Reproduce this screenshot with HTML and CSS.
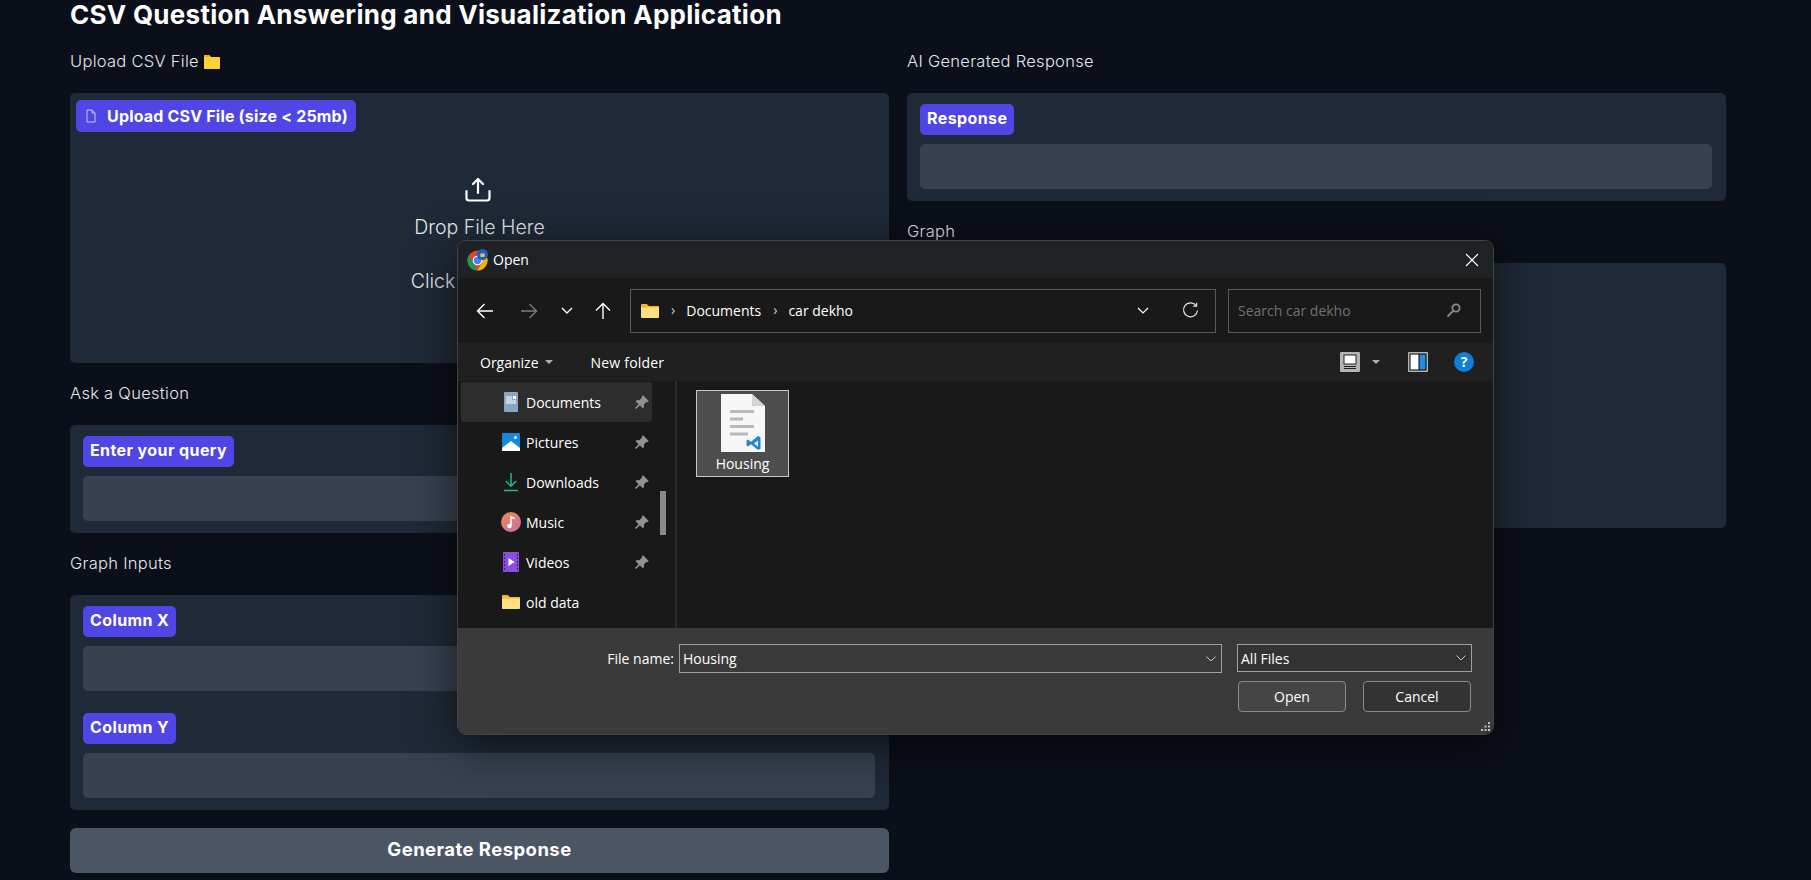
FILE: index.html
```html
<!DOCTYPE html>
<html lang="en">
<head>
    <meta charset="UTF-8">
    <title>CSV Question Answering and Visualization Application</title>
    <link rel="stylesheet" href="styles.css">
</head>
<body>
    <svg class="defs" width="0" height="0">
        <symbol id="pin" viewBox="0 0 14 14">
            <path d="M8 .3l5.700 5.700-1.200 1.200-1.200-.3-2.500 2.500.3 2.500-1.300 1.300-2.900-2.900L1 14l-1-1 3.500-3.800L.6 6.300l1.300-1.300 2.500.3L6.900 2.800l-.2-1.200z" fill="#8f9296"/>
        </symbol>
        <symbol id="folder" viewBox="0 0 18 14">
            <path d="M0 1.200C0 .5.5 0 1.200 0h4.600l2 2H17c.6 0 1 .4 1 1v2H0z" fill="#f5b91f"/>
            <path d="M0 3.500h18v9.400c0 .6-.5 1.100-1.100 1.100H1.100C.5 14 0 13.500 0 12.900z" fill="#ffdf7e"/>
        </symbol>
    </svg>

    <main class="page">
        <h1 class="title">CSV Question Answering and Visualization Application</h1>
        <div class="columns">
            <div class="col">
                <p class="label">Upload CSV File
                    <svg width="16" height="14" viewBox="0 0 16 14"><path d="M0 1c0-.6.4-1 1-1h4l2 2h8c.6 0 1 .4 1 1v10c0 .6-.4 1-1 1H1c-.6 0-1-.4-1-1z" fill="#fdd035"/><path d="M0 1c0-.6.4-1 1-1h4l2 2H0z" fill="#f6a821"/></svg>
                </p>
                <section class="panel upload">
                    <span class="pill pill-upload">
                        <svg width="14" height="14" viewBox="0 0 14 14" fill="none" stroke="#c7c4f5" stroke-width="1"><path d="M3 1h5l3 3v9H3z"/><path d="M8 1v3h3"/></svg>
                        Upload CSV File (size &lt; 25mb)
                    </span>
                    <div class="dropzone">
                        <svg class="drop-icon" width="26" height="25" viewBox="0 0 26 25" fill="none" stroke="#fff" stroke-width="2.200" stroke-linecap="round" stroke-linejoin="round"><path d="M13 16V2M8 7l5-5 5 5"/><path d="M1.500 14v7c0 1.500 1 2.500 2.500 2.500h18c1.500 0 2.500-1 2.500-2.500v-7"/></svg>
                        <p class="drop-text">Drop File Here</p>
                        <p class="drop-or">- or -</p>
                        <p class="drop-text">Click to Upload</p>
                    </div>
                </section>

                <p class="label">Ask a Question</p>
                <section class="panel">
                    <span class="pill">Enter your query</span>
                    <div class="field"></div>
                </section>

                <p class="label">Graph Inputs</p>
                <section class="panel">
                    <span class="pill">Column X</span>
                    <div class="field"></div>
                    <span class="pill pill-next">Column Y</span>
                    <div class="field"></div>
                </section>

                <button class="generate" type="button">Generate Response</button>
            </div>

            <div class="col">
                <p class="label">AI Generated Response</p>
                <section class="panel">
                    <span class="pill">Response</span>
                    <div class="field"></div>
                </section>

                <p class="label">Graph</p>
                <section class="panel graph"></section>
            </div>
        </div>
    </main>

    <div class="dialog">
        <div class="dlg-title">
            <svg class="chrome" width="22" height="22" viewBox="0 0 22 22">
                <circle cx="10.500" cy="11.500" r="10" fill="#db4437"/>
                <path d="M10.500 21.500A10 10 0 0 1 1.800 6.500l5 8.700 3.700 6.300z" fill="#0f9d58"/>
                <path d="M10.500 21.500a10 10 0 0 0 8.700-15h-8.700l4.300 7.500z" fill="#f4b400"/>
                <circle cx="10.500" cy="11.500" r="4.800" fill="#fff"/>
                <circle cx="10.500" cy="11.500" r="3.700" fill="#4285f4"/>
                <circle cx="15.500" cy="5.500" r="5.500" fill="#1a5fc4"/>
                <rect x="13.300" y="4.500" width="4.400" height="3.400" fill="#f4c430"/>
            </svg>
            <span>Open</span>
            <svg class="close" width="14" height="14" viewBox="0 0 14 14" stroke="#fff" stroke-width="1.100"><path d="M1 1l12 12M13 1 1 13"/></svg>
        </div>

        <div class="dlg-nav">
            <svg class="nav-back" width="18" height="18" viewBox="0 0 18 18" fill="none" stroke="#fff" stroke-width="1.400"><path d="M17 9H1.500M8.500 2 1.500 9l7 7"/></svg>
            <svg class="nav-fwd" width="18" height="18" viewBox="0 0 18 18" fill="none" stroke="#7c7c7c" stroke-width="1.400"><path d="M1 9h15.500M9.500 2l7 7-7 7"/></svg>
            <svg class="nav-down" width="12" height="8" viewBox="0 0 12 8" fill="none" stroke="#fff" stroke-width="1.400"><path d="M1 1l5 5 5-5"/></svg>
            <svg class="nav-up" width="18" height="18" viewBox="0 0 18 18" fill="none" stroke="#fff" stroke-width="1.400"><path d="M9 17V1.500M2 8.500l7-7 7 7"/></svg>
            <div class="address">
                <svg width="18" height="14"><use href="#folder"/></svg>
                <span class="crumb-sep">›</span>
                <span>Documents</span>
                <span class="crumb-sep">›</span>
                <span>car dekho</span>
                <svg class="addr-down" width="12" height="8" viewBox="0 0 12 8" fill="none" stroke="#fff" stroke-width="1.200"><path d="M1 1l5 5 5-5"/></svg>
                <svg class="addr-refresh" width="17" height="17" viewBox="0 0 17 17" fill="none" stroke="#e8e8e8" stroke-width="1.200"><path d="M14 3.400A7 7 0 1 0 15.500 8.500"/><path d="M14.600.8v3.400h-3.400"/></svg>
            </div>
            <div class="search">
                <span>Search car dekho</span>
                <svg width="15" height="15" viewBox="0 0 15 15" fill="none" stroke="#8a8a8a" stroke-width="1.800"><circle cx="10" cy="5" r="3.600"/><path d="M7.400 7.600 1.500 13.500"/></svg>
            </div>
        </div>

        <div class="dlg-tools">
            <span class="tool-org">Organize</span>
            <i class="caret caret-org"></i>
            <span class="tool-new">New folder</span>
            <svg class="tool-view" width="20" height="20" viewBox="0 0 20 20">
                <rect width="20" height="20" rx="1" fill="#b4b4b4"/>
                <rect x="4" y="3" width="12" height="9" fill="#fff" stroke="#222"/>
                <path d="M4 14.500h12M4 16.500h12" stroke="#222"/>
            </svg>
            <i class="caret caret-view"></i>
            <svg class="tool-pane" width="20" height="20" viewBox="0 0 20 20">
                <rect width="20" height="20" rx="1" fill="#b4b4b4"/>
                <rect x="1.500" y="1.500" width="17" height="17" fill="#000"/>
                <rect x="2.500" y="2.500" width="8" height="15" fill="#fff"/>
                <rect x="11.500" y="2.500" width="6" height="15" fill="#1e8fe1"/>
            </svg>
            <span class="tool-help">?</span>
        </div>

        <div class="dlg-body">
            <nav class="side">
                <div class="side-row side-active">
                    <span class="side-icon"><svg width="14" height="20" viewBox="0 0 14 20"><rect width="14" height="20" rx="1" fill="#8aa5c4"/><path d="M2 5h6M2 7h6M2 9h10M2 11h10" stroke="#fff"/><rect x="9" y="4" width="3" height="3" fill="#fff"/></svg></span>
                    Documents
                    <svg class="pin" width="14" height="14"><use href="#pin"/></svg>
                </div>
                <div class="side-row">
                    <span class="side-icon"><svg width="18" height="18" viewBox="0 0 18 18"><rect width="18" height="18" rx="1" fill="#1689dc"/><path d="M0 15 9 8l9 7v3H0z" fill="#fff"/><circle cx="13.500" cy="4.500" r="1.500" fill="#fff"/></svg></span>
                    Pictures
                    <svg class="pin" width="14" height="14"><use href="#pin"/></svg>
                </div>
                <div class="side-row">
                    <span class="side-icon"><svg width="14" height="20" viewBox="0 0 14 20" fill="none" stroke="#21b892" stroke-width="1.500"><path d="M7 1v13M1.800 9 7 14.200 12.200 9M0 18.500h14"/></svg></span>
                    Downloads
                    <svg class="pin" width="14" height="14"><use href="#pin"/></svg>
                </div>
                <div class="side-row">
                    <span class="side-icon"><svg width="20" height="20" viewBox="0 0 20 20"><defs><linearGradient id="musicBg" x1="0" y1="0" x2="1" y2="1"><stop offset="0" stop-color="#ec8a4e"/><stop offset="1" stop-color="#c46fb0"/></linearGradient></defs><circle cx="10" cy="10" r="10" fill="url(#musicBg)"/><circle cx="8.500" cy="14" r="2.300" fill="#fff"/><path d="M10 14V5l3.500 1.500" stroke="#fff" stroke-width="1.500" fill="none"/></svg></span>
                    Music
                    <svg class="pin" width="14" height="14"><use href="#pin"/></svg>
                </div>
                <div class="side-row">
                    <span class="side-icon"><svg width="16" height="20" viewBox="0 0 16 20"><rect width="16" height="20" rx="1" fill="#8a4fe0"/><path d="M5.500 6v8l6-4z" fill="#fff"/><path d="M1.500 2v16M14.500 2v16" stroke="#2a1550" stroke-width="1.200" stroke-dasharray="1.500 2"/></svg></span>
                    Videos
                    <svg class="pin" width="14" height="14"><use href="#pin"/></svg>
                </div>
                <div class="side-row">
                    <span class="side-icon"><svg width="18" height="14"><use href="#folder"/></svg></span>
                    old data
                </div>
                <div class="side-thumb"></div>
            </nav>
            <div class="files">
                <div class="file-item">
                    <svg width="44" height="58" viewBox="0 0 44 58">
                        <path d="M0 0h31l13 12v46H0z" fill="#f7f7f7"/>
                        <path d="M31 0l13 12H31z" fill="#d4d4d4"/>
                        <path d="M9 17.500h24M9 25h13M9 32.500h24M9 40h18" stroke="#b9b9b9" stroke-width="3"/>
                        <path d="M37 45.500l-7 5.800-3-2.300-1.500.9v5.200l1.500.9 3-2.300 7 5.800 2.500-1.200V46.700zM37 50v6l-4-3z" fill="#1f8ad2" fill-rule="evenodd" transform="translate(0 -3.500)"/>
                    </svg>
                    <span>Housing</span>
                </div>
            </div>
        </div>

        <div class="dlg-foot">
            <div class="foot-row">
                <label class="foot-label">File name:</label>
                <div class="combo combo-name">Housing
                    <svg width="10" height="6" viewBox="0 0 10 6" fill="none" stroke="#c8c8c8"><path d="M.5.500 5 5 9.500.500"/></svg>
                </div>
                <div class="combo combo-type">All Files
                    <svg width="10" height="6" viewBox="0 0 10 6" fill="none" stroke="#c8c8c8"><path d="M.5.500 5 5 9.500.500"/></svg>
                </div>
            </div>
            <div class="foot-buttons">
                <button class="dlg-btn dlg-btn-main" type="button">Open</button>
                <button class="dlg-btn" type="button">Cancel</button>
            </div>
            <svg class="grip" width="10" height="10" viewBox="0 0 10 10" fill="#c4c4c4"><path d="M7 0h2v2H7zM7 3.500h2v2H7zM3.500 3.500h2v2h-2zM7 7h2v2H7zM3.500 7h2v2h-2zM0 7h2v2H0z"/></svg>
        </div>
    </div>
</body>
</html>
```

FILE: styles.css
```css
html, body {
    margin: 0;
    height: 880px;
    overflow: hidden;
}
body {
    background: #0b0f19;
    color: #f3f4f6;
    font-family: Inter, sans-serif;
    position: relative;
}
p {
    margin: 0;
}
.defs {
    position: absolute;
}

/* page behind the dialog */
.page {
    padding: 0 85px 0 70px;
}
.title {
    margin: 0;
    height: 52px;
    font-size: 26px;
    line-height: 30px;
    letter-spacing: 0.27px;
    font-weight: 700;
    color: #fff;
}
.columns {
    display: flex;
    gap: 18px;
}
.col {
    flex: 1;
    min-width: 0;
}
.label {
    height: 20px;
    margin-bottom: 21px;
    font-size: 16.500px;
    line-height: 18px;
    letter-spacing: 0.28px;
    font-weight: 300;
    color: #e5e7eb;
    display: flex;
    align-items: flex-start;
    gap: 5px;
}
.label svg {
    margin-top: 3px;
}
.panel {
    background: #1f2937;
    border-radius: 5px;
    padding: 11px 14px 12px 13px;
    margin-bottom: 21px;
}
.pill {
    display: table;
    height: 31px;
    padding: 0 7px;
    background: #4f46e5;
    border-radius: 5px;
    font-size: 16px;
    line-height: 29px;
    letter-spacing: 0.4px;
    font-weight: 700;
    color: #fff;
}
.pill-next {
    margin-top: 22px;
}
.field {
    height: 45px;
    margin-top: 9px;
    background: #374151;
    border-radius: 5px;
}
.upload {
    height: 270px;
    box-sizing: border-box;
    padding: 7px 6px;
}
.pill-upload {
    display: flex;
    width: fit-content;
    align-items: center;
    gap: 9px;
    height: 32px;
    padding: 0 8px;
    letter-spacing: 0.18px;
}
.dropzone {
    display: flex;
    flex-direction: column;
    align-items: center;
    padding-top: 45px;
}
.drop-icon {
    margin-right: 4px;
    margin-bottom: 13px;
}
.drop-text {
    font-size: 19.500px;
    line-height: 24px;
    font-weight: 300;
    color: #e5e7eb;
}
.drop-or {
    font-size: 15px;
    line-height: 20px;
    margin: 5px 0;
    color: #9ca3af;
}
.graph {
    height: 265px;
    box-sizing: border-box;
}
.generate {
    display: block;
    width: 100%;
    height: 45px;
    margin-top: -3px;
    padding: 0 0 4px;
    background: #4b5563;
    border: none;
    border-radius: 6px;
    font-family: inherit;
    font-size: 18.500px;
    letter-spacing: 0.45px;
    font-weight: 700;
    color: #fff;
}

/* windows file dialog */
.dialog {
    position: absolute;
    left: 457px;
    top: 240px;
    width: 1037px;
    height: 495px;
    display: flex;
    flex-direction: column;
    overflow: hidden;
    box-sizing: border-box;
    border: 1px solid #3f4347;
    border-radius: 9px;
    background: #191919;
    box-shadow: 0 10px 45px rgba(0, 0, 0, 0.6);
    font-family: "Open Sans", sans-serif;
    font-size: 14px;
    color: #fff;
}
.dlg-title {
    flex: 0 0 37px;
    display: flex;
    align-items: center;
    gap: 4px;
    padding-left: 9px;
    background: #1f2225;
}
.close {
    margin-left: auto;
    margin-right: 14px;
}
.dlg-nav {
    flex: 0 0 65px;
    display: flex;
    align-items: center;
    background: #191919;
}
.nav-back {
    margin-left: 18px;
}
.nav-fwd {
    margin-left: 26px;
}
.nav-down {
    margin-left: 23px;
}
.nav-up {
    margin-left: 21px;
}
.address, .search {
    height: 44px;
    box-sizing: border-box;
    border: 1px solid #5a5a5a;
    display: flex;
    align-items: center;
}
.address {
    width: 586px;
    margin-left: 18px;
    padding-left: 10px;
}
.crumb-sep {
    margin: 0 11px 2px 12px;
    color: #d0d0d0;
}
.addr-down {
    margin-left: auto;
}
.addr-refresh {
    margin-left: 33px;
    margin-right: 16px;
}
.search {
    width: 253px;
    margin-left: 12px;
    padding: 0 19px 0 9px;
    justify-content: space-between;
    color: #707070;
}
.dlg-tools {
    flex: 0 0 38px;
    display: flex;
    align-items: center;
    background: #202020;
}
.tool-org {
    margin-left: 22px;
}
.caret {
    width: 0;
    height: 0;
    border-left: 4px solid transparent;
    border-right: 4px solid transparent;
    border-top: 4px solid #b0b0b0;
}
.caret-org {
    margin-left: 6px;
}
.tool-new {
    margin-left: 38px;
    letter-spacing: 0.2px;
}
.tool-view {
    margin-left: auto;
}
.caret-view {
    margin-left: 12px;
}
.tool-pane {
    margin-left: 28px;
}
.tool-help {
    width: 20px;
    height: 20px;
    margin-left: 26px;
    margin-right: 19px;
    border-radius: 50%;
    background: #0f7fd8;
    text-align: center;
    font-size: 14px;
    line-height: 20px;
    font-weight: 700;
}
.dlg-body {
    flex: 0 0 247px;
    display: flex;
    background: #191919;
}
.side {
    position: relative;
    padding: 1px 0 0 3px;
    box-sizing: border-box;
    border-right: 2px solid #2a2a2a;
    width: 219px;
}
.side-row {
    width: 191px;
    height: 40px;
    display: flex;
    align-items: center;
    padding-right: 3px;
    box-sizing: border-box;
}
.side-active {
    background: #2d2d2d;
    border-radius: 3px;
}
.side-icon {
    width: 24px;
    margin-left: 38px;
    margin-right: 3px;
    display: flex;
    justify-content: center;
}
.pin {
    margin-left: auto;
}
.side-thumb {
    position: absolute;
    left: 202px;
    top: 110px;
    width: 6px;
    height: 44px;
    background: #8a8a8a;
}
.files {
    flex: 1;
    padding: 9px 0 0 19px;
}
.file-item {
    width: 93px;
    height: 87px;
    box-sizing: border-box;
    border: 1px solid #c8c8c8;
    background: #4d4d4d;
    display: flex;
    flex-direction: column;
    align-items: center;
    padding-top: 3px;
    line-height: 24px;
}
.dlg-foot {
    flex: 1;
    position: relative;
    background: #3a3a3a;
    padding: 16px 21px 0 0;
}
.foot-row {
    display: flex;
    align-items: flex-start;
    justify-content: flex-end;
}
.foot-label {
    line-height: 29px;
    margin-right: 5px;
}
.combo {
    height: 29px;
    box-sizing: border-box;
    border: 1px solid #a0a0a0;
    display: flex;
    align-items: center;
    justify-content: space-between;
    padding: 0 5px 0 3px;
}
.combo-name {
    width: 543px;
}
.combo-type {
    width: 235px;
    height: 28px;
    margin-left: 15px;
    background: #333;
}
.foot-buttons {
    display: flex;
    justify-content: flex-end;
    gap: 17px;
    margin-top: 8px;
    padding-right: 1px;
}
.dlg-btn {
    width: 108px;
    height: 31px;
    border: 1px solid #8a8a8a;
    border-radius: 4px;
    background: #333;
    color: #fff;
    font-family: inherit;
    font-size: 14px;
}
.dlg-btn-main {
    background: #454545;
}
.grip {
    position: absolute;
    right: 2px;
    bottom: 2px;
}
```
